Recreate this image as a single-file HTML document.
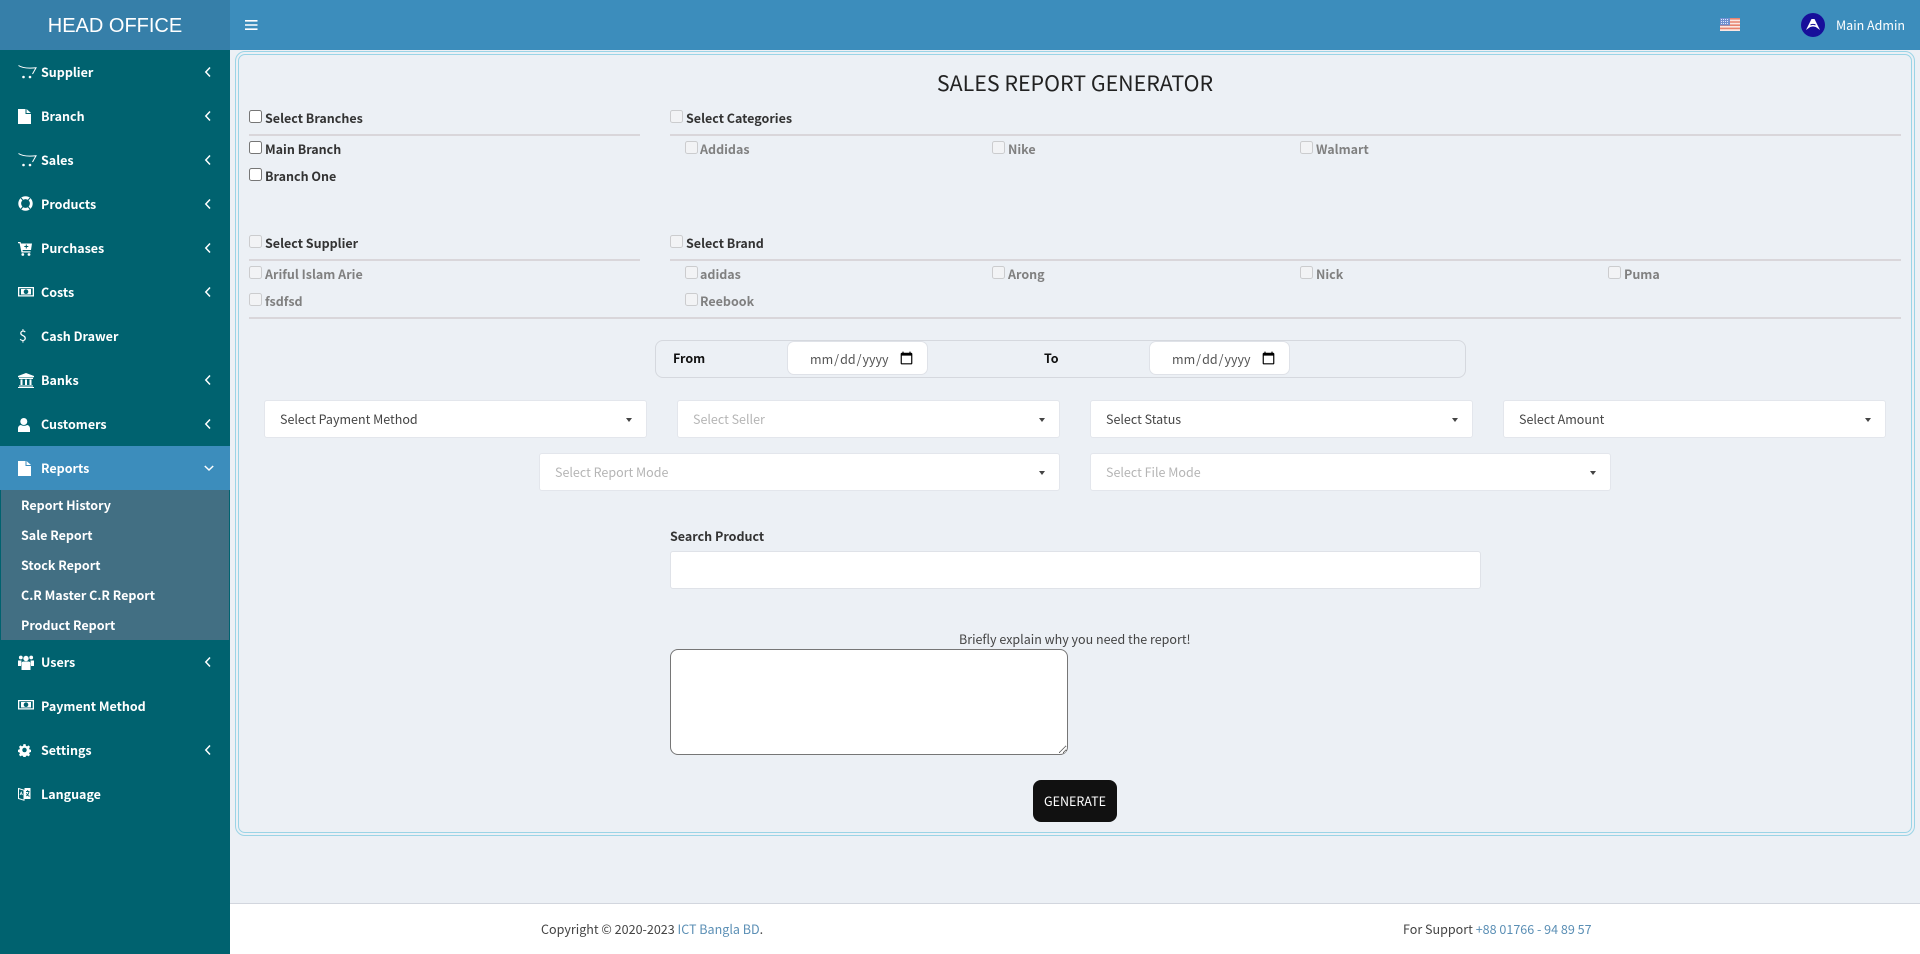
<!DOCTYPE html>
<html lang="en"><head><meta charset="utf-8"><title>Sales Report Generator</title>
<style>
*{box-sizing:border-box}
html,body{margin:0;padding:0;width:1920px;height:954px;overflow:hidden;background:#ecf0f5}
body{position:relative;font:12.5px/20px "Noto Sans CJK JP","Liberation Sans",sans-serif;color:#333}
.a{position:absolute}
.t{position:absolute;white-space:nowrap;line-height:20px}
.b{font-weight:700}
.side{left:0;top:50px;width:230px;height:904px;background:#00626f}
.m{position:absolute;left:41px;color:#fff;font-weight:700;font-size:12.5px;line-height:20px;white-space:nowrap}
.s{position:absolute;left:21px;color:#fff;font-weight:700;font-size:12.5px;line-height:20px;white-space:nowrap}
.i{position:absolute;left:18px;width:18px;height:18px;fill:#fff}
.c{position:absolute;left:204px;width:8px;height:12px;fill:none;stroke:#fff;stroke-width:1.5}
input[type=checkbox]{position:absolute;margin:0;width:13px;height:13px}
.l{position:absolute;height:2px;background:#d9d6da}
.sel{position:absolute;height:38px;background:#fff;border:1px solid #e3e6ec;border-radius:3px;line-height:36px;padding-left:15px;color:#444;white-space:nowrap}
.sel.p{color:#b5b5b5}
.sel:after{content:"";position:absolute;right:14px;top:17px;border:3px solid transparent;border-top:4px solid #444;border-bottom:0}
.g{color:#808080}
input[type=date]{position:absolute;background:#fff;border:1px solid #dfe2e8;border-radius:7px;font:12.5px "Noto Sans CJK JP","Liberation Sans",sans-serif;color:#555;text-align:left;padding:0 13px 0 21px;height:34px;width:141px}
input[type=date]::-webkit-calendar-picker-indicator{width:15px;height:15px;padding:0;margin:0}
</style></head><body>

<div class="a" style="left:230px;top:0;width:1690px;height:50px;background:#3c8dbc"></div>
<div class="a" style="left:0;top:0;width:230px;height:50px;background:#367fa9"></div>
<div class="t" style="left:0;width:230px;top:10px;text-align:center;font:20px/32px 'Liberation Sans',Arial,sans-serif;color:#fff">HEAD OFFICE</div>
<svg class="a" style="left:245px;top:19px" width="13" height="12" viewBox="0 0 13 12"><path d="M0 1h12.500v1.600H0zM0 5.200h12.500v1.600H0zM0 9.400h12.500V11H0z" fill="#fff"/></svg>

<svg class="a" style="left:1720px;top:18px" width="20" height="13" viewBox="0 0 20 13"><rect width="20" height="13" fill="#fbe6e2"/><path d="M0 0h20v1.600H0zM0 3.200h20v1.600H0zM0 6.400h20V8H0zM0 9.600h20v1.600H0z" fill="#e8836f"/><rect width="10" height="7.500" fill="#6f8fd0"/><path d="M1 1.500h8M1 3.500h8M1 5.500h8" stroke="#dfe8ff" stroke-dasharray="1 1"/></svg>
<svg class="a" style="left:1801px;top:13px" width="24" height="24" viewBox="0 0 24 24"><circle cx="12" cy="12" r="12" fill="#170f9a"/><path d="M5 17 10.500 6h3L19 17l-3.800-2.800c-2-1-4.400-1-6.400 0z" fill="#fff"/><path d="M9.500 12c1.500-.8 3.500-.8 5 0" stroke="#170f9a" fill="none"/></svg>
<div class="t" style="left:1836px;top:15px;color:#fff">Main Admin</div>

<div class="a side"></div>
<div class="a" style="left:0;top:446px;width:230px;height:44px;background:#3c8dbc"></div>
<div class="a" style="left:1px;top:490px;width:228px;height:150px;background:#426f83"></div>

<!-- icons -->
<svg class="i" style="top:63px;width:20px" viewBox="0 0 20 18" ><path d="M.5 2.500C4 5 11 5.500 18 4.800L14.500 11" fill="none" stroke="#fff" stroke-width="1"/><circle cx="5.500" cy="14" r="1.300"/><circle cx="12" cy="14" r="1.300"/></svg>
<svg class="i" style="top:109px;width:13px;height:15px" viewBox="0 0 13 15"><path d="M0 0h7.500v5H13v10H0zM8.500 0 13 4H8.500z"/></svg>
<svg class="i" style="top:151px;width:20px" viewBox="0 0 20 18"><path d="M.5 2.500C4 5 11 5.500 18 4.800L14.500 11" fill="none" stroke="#fff" stroke-width="1"/><circle cx="5.500" cy="14" r="1.300"/><circle cx="12" cy="14" r="1.300"/></svg>
<svg class="i" style="top:196px;width:15px;height:15px" viewBox="0 0 15 15"><circle cx="7.500" cy="7.500" r="5.800" fill="none" stroke="#fff" stroke-width="2.800"/><path d="M3 2 6 5.500M12 2 9 5.500M3 13l3-3.500M12 13 9 9.500" stroke="#00626f" stroke-width="1"/></svg>
<svg class="i" style="top:242px;width:14px;height:14px" viewBox="0 0 14 14"><path d="M0 0h2.500l.5 1.500H14l-1 6.500H4.500l.3 1.300H12.500v1.200H3.500L1.600 1.200H0z"/><circle cx="4.800" cy="12.500" r="1.400"/><circle cx="11" cy="12.500" r="1.400"/><path d="M8.300 2.500v4M6.300 4.500h4" stroke="#00626f" stroke-width="1"/></svg>
<svg class="i" style="top:286px;width:16px;height:12px" viewBox="0 0 16 12"><path fill-rule="evenodd" d="M0 1h16v9.500H0zM1.300 2.300v7h13.400v-7z"/><path d="M3 3h10v5.500H3z"/><circle cx="8" cy="5.700" r="2.300" fill="#00626f"/></svg>
<div class="t" style="left:19px;top:326px;color:#fff;font-size:14px">$</div>
<svg class="i" style="top:373px;width:16px;height:15px" viewBox="0 0 16 15"><path d="M8 0l8 3v1.200H0V3zM1 4.800h14V6H1zM2.500 6.500h2v5.500h-2zM7 6.500h2v5.500H7zM11.500 6.500h2v5.500h-2zM1 12.500h14v1H1zM0 14h16v1H0z"/></svg>
<svg class="i" style="top:418px;width:12px;height:14px" viewBox="0 0 12 14"><circle cx="5.800" cy="3.500" r="3.500"/><path d="M0 14v-3.500C0 8.500 1.500 7 3 7c1.500 1 4.500 1 6 0 1.500 0 3 1.500 3 3.500V14z"/></svg>
<svg class="i" style="top:461px;width:13px;height:15px" viewBox="0 0 13 15"><path d="M0 0h7.500v5H13v10H0zM8.500 0 13 4H8.500z"/></svg>
<svg class="i" style="top:655px;width:16px;height:15px" viewBox="0 0 16 15"><circle cx="8" cy="3.500" r="2.700"/><circle cx="2.800" cy="2.500" r="1.900"/><circle cx="13.200" cy="2.500" r="1.900"/><path d="M0 5.500h3.500L3 11H0zM16 5.500h-3.500L13 11h3zM3.500 15V8.500C3.500 7 4.500 6.500 5.500 6.500h5c1 0 2 .5 2 2V15z"/></svg>
<svg class="i" style="top:699px;width:16px;height:12px" viewBox="0 0 16 12"><path fill-rule="evenodd" d="M0 1h16v9.500H0zM1.300 2.300v7h13.400v-7z"/><path d="M3 3h10v5.500H3z"/><circle cx="8" cy="5.700" r="2.300" fill="#00626f"/></svg>
<svg class="i" style="top:743px;width:13px;height:14px" viewBox="0 0 14 14"><path d="M5.700 0h2.600l.4 2 1.400.6 1.700-1.100 1.800 1.800-1.100 1.700.6 1.400 2 .4v2.600l-2 .4-.6 1.400 1.100 1.700-1.800 1.800-1.700-1.100-1.400.6-.4 2H5.700l-.4-2-1.400-.6-1.700 1.100L.4 12.900l1.100-1.700-.6-1.400-2-.4V6.800l2-.4.600-1.400L.4 3.300l1.800-1.800 1.700 1.100 1.400-.6z" transform="translate(.7 .7) scale(.9)"/><circle cx="7" cy="7" r="2.400" fill="#00626f"/></svg>
<svg class="i" style="top:787px;width:13px;height:14px" viewBox="0 0 13 14"><path d="M.5 1.500 6 3.200v10L.5 11.500z" fill="none" stroke="#fff"/><path d="M6.500 1h6v11h-6z"/><path d="M8 4.500h3.500M9.700 3v1.500M8.200 9c2-1 2.500-2.500 2.800-4.500M8.500 6c.5 1.500 1.500 2.800 3 3.300" stroke="#00626f" stroke-width=".9" fill="none"/><path d="M2 8l1.200-3 1.300 3M2.400 7h1.600" stroke="#fff" stroke-width=".7" fill="none"/></svg>

<!-- chevrons -->
<svg class="c" style="top:66px" viewBox="0 0 8 12"><path d="M6 1.500 1.800 6 6 10.500"/></svg>
<svg class="c" style="top:110px" viewBox="0 0 8 12"><path d="M6 1.500 1.800 6 6 10.500"/></svg>
<svg class="c" style="top:154px" viewBox="0 0 8 12"><path d="M6 1.500 1.800 6 6 10.500"/></svg>
<svg class="c" style="top:198px" viewBox="0 0 8 12"><path d="M6 1.500 1.800 6 6 10.500"/></svg>
<svg class="c" style="top:242px" viewBox="0 0 8 12"><path d="M6 1.500 1.800 6 6 10.500"/></svg>
<svg class="c" style="top:286px" viewBox="0 0 8 12"><path d="M6 1.500 1.800 6 6 10.500"/></svg>
<svg class="c" style="top:374px" viewBox="0 0 8 12"><path d="M6 1.500 1.800 6 6 10.500"/></svg>
<svg class="c" style="top:418px" viewBox="0 0 8 12"><path d="M6 1.500 1.800 6 6 10.500"/></svg>
<svg class="c" style="top:462px;left:204px;width:10px;height:12px" viewBox="0 0 10 12"><path d="M.8 4 5 8l4.200-4"/></svg>
<svg class="c" style="top:656px" viewBox="0 0 8 12"><path d="M6 1.500 1.800 6 6 10.500"/></svg>
<svg class="c" style="top:744px" viewBox="0 0 8 12"><path d="M6 1.500 1.800 6 6 10.500"/></svg>

<!-- menu text -->
<div class="m" style="top:62px">Supplier</div>
<div class="m" style="top:106px">Branch</div>
<div class="m" style="top:150px">Sales</div>
<div class="m" style="top:194px">Products</div>
<div class="m" style="top:238px">Purchases</div>
<div class="m" style="top:282px">Costs</div>
<div class="m" style="top:326px">Cash Drawer</div>
<div class="m" style="top:370px">Banks</div>
<div class="m" style="top:414px">Customers</div>
<div class="m" style="top:458px">Reports</div>
<div class="s" style="top:495px">Report History</div>
<div class="s" style="top:525px">Sale Report</div>
<div class="s" style="top:555px">Stock Report</div>
<div class="s" style="top:585px">C.R Master C.R Report</div>
<div class="s" style="top:615px">Product Report</div>
<div class="m" style="top:652px">Users</div>
<div class="m" style="top:696px">Payment Method</div>
<div class="m" style="top:740px">Settings</div>
<div class="m" style="top:784px">Language</div>

<!-- panel -->
<div class="a" style="left:235px;top:51px;width:1680px;height:785px;border:4px double #9ad4e6;border-radius:10px"></div>
<div class="t" style="left:236px;width:1678px;top:66px;text-align:center;font-size:21.4px;line-height:34px;color:#222">SALES REPORT GENERATOR</div>

<input type="checkbox" style="left:249px;top:110px"><div class="t b" style="left:265px;top:108px">Select Branches</div>
<input type="checkbox" disabled style="left:670px;top:110px"><div class="t b" style="left:686px;top:108px">Select Categories</div>
<div class="l" style="left:249px;top:134px;width:391px"></div>
<div class="l" style="left:670px;top:134px;width:1231px"></div>
<input type="checkbox" style="left:249px;top:141px"><div class="t b" style="left:265px;top:139px">Main Branch</div>
<input type="checkbox" style="left:249px;top:168px"><div class="t b" style="left:265px;top:166px">Branch One</div>
<input type="checkbox" disabled style="left:685px;top:141px"><div class="t b g" style="left:700px;top:139px">Addidas</div>
<input type="checkbox" disabled style="left:992px;top:141px"><div class="t b g" style="left:1008px;top:139px">Nike</div>
<input type="checkbox" disabled style="left:1300px;top:141px"><div class="t b g" style="left:1316px;top:139px">Walmart</div>

<input type="checkbox" disabled style="left:249px;top:235px"><div class="t b" style="left:265px;top:233px">Select Supplier</div>
<input type="checkbox" disabled style="left:670px;top:235px"><div class="t b" style="left:686px;top:233px">Select Brand</div>
<div class="l" style="left:249px;top:259px;width:391px"></div>
<div class="l" style="left:670px;top:259px;width:1231px"></div>
<input type="checkbox" disabled style="left:249px;top:266px"><div class="t b g" style="left:265px;top:264px">Ariful Islam Arie</div>
<input type="checkbox" disabled style="left:249px;top:293px"><div class="t b g" style="left:265px;top:291px">fsdfsd</div>
<input type="checkbox" disabled style="left:685px;top:266px"><div class="t b g" style="left:700px;top:264px">adidas</div>
<input type="checkbox" disabled style="left:685px;top:293px"><div class="t b g" style="left:700px;top:291px">Reebook</div>
<input type="checkbox" disabled style="left:992px;top:266px"><div class="t b g" style="left:1008px;top:264px">Arong</div>
<input type="checkbox" disabled style="left:1300px;top:266px"><div class="t b g" style="left:1316px;top:264px">Nick</div>
<input type="checkbox" disabled style="left:1608px;top:266px"><div class="t b g" style="left:1624px;top:264px">Puma</div>
<div class="l" style="left:249px;top:317px;width:1652px"></div>

<!-- date range -->
<div class="a" style="left:655px;top:340px;width:811px;height:38px;border:1px solid #d5d8de;border-radius:8px"></div>
<div class="t b" style="left:673px;top:348px;color:#111">From</div>
<input type="date" style="left:787px;top:341px">
<div class="t b" style="left:1044px;top:348px;color:#111">To</div>
<input type="date" style="left:1149px;top:341px">

<!-- selects -->
<div class="sel" style="left:264px;top:400px;width:383px">Select Payment Method</div>
<div class="sel p" style="left:677px;top:400px;width:383px">Select Seller</div>
<div class="sel" style="left:1090px;top:400px;width:383px">Select Status</div>
<div class="sel" style="left:1503px;top:400px;width:383px">Select Amount</div>
<div class="sel p" style="left:539px;top:453px;width:521px">Select Report Mode</div>
<div class="sel p" style="left:1090px;top:453px;width:521px">Select File Mode</div>

<div class="t b" style="left:670px;top:526px">Search Product</div>
<div class="a" style="left:670px;top:551px;width:811px;height:38px;background:#fff;border:1px solid #dfe2e8;border-radius:3px"></div>

<div class="t" style="left:959px;top:629px;color:#444">Briefly explain why you need the report!</div>
<textarea class="a" style="left:670px;top:649px;width:398px;height:106px;margin:0;border:1px solid #767676;border-radius:8px;background:#fff"></textarea>
<div class="a" style="left:1033px;top:780px;width:84px;height:42px;background:#111;border-radius:8px;color:#fff;text-align:center;line-height:42px;font-size:12.5px">GENERATE</div>

<!-- footer -->
<div class="a" style="left:230px;top:903px;width:1690px;height:51px;background:#fff;border-top:1px solid #d2d6de"></div>
<div class="t" style="left:541px;top:919px;color:#444;font-size:12.55px">Copyright © 2020-2023 <span style="color:#5b8fb5">ICT Bangla BD</span>.</div>
<div class="t" style="left:1403px;top:919px;color:#444;font-size:12.55px">For Support <span style="color:#5b8fb5">+88 01766 - 94 89 57</span></div>
</body></html>
